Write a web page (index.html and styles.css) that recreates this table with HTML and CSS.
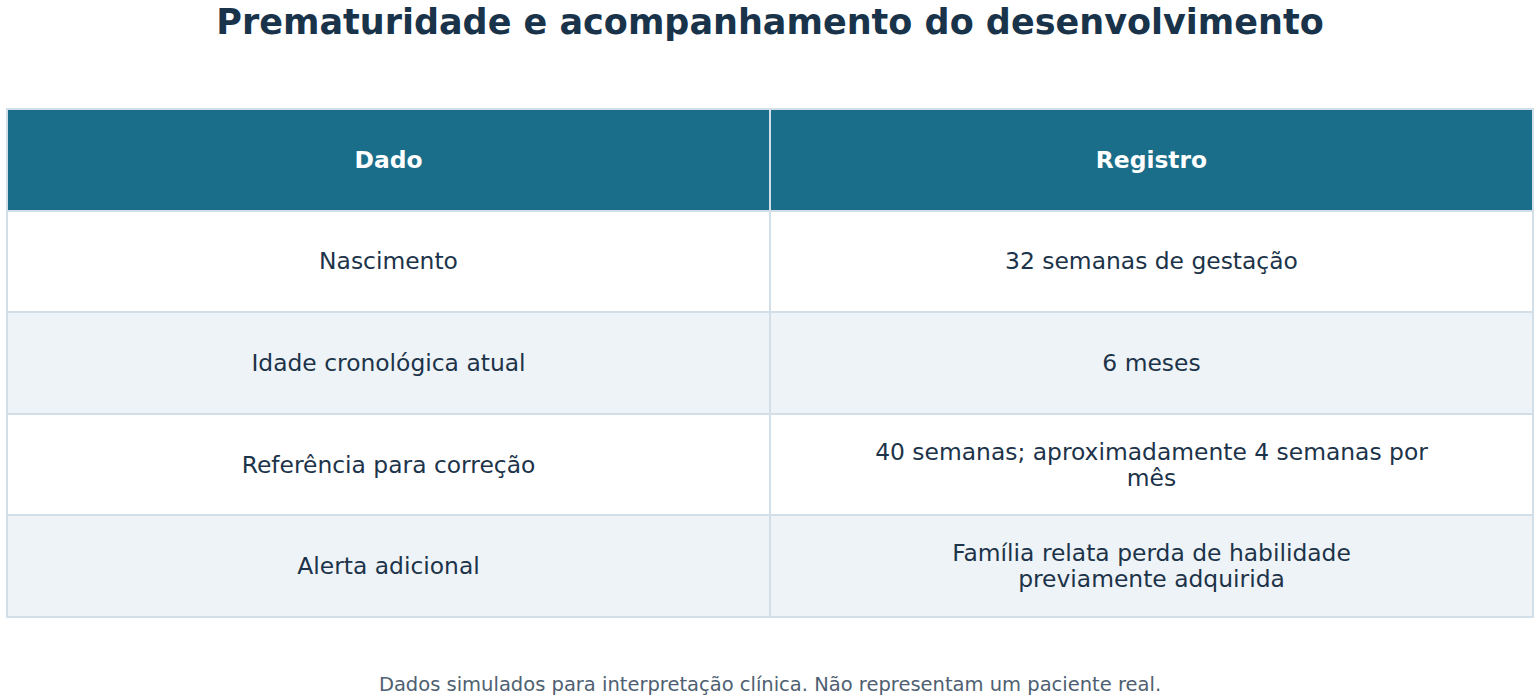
FILE: index.html
```html
<!DOCTYPE html>
<html lang="pt">
<head>
<meta charset="utf-8">
<link rel="stylesheet" href="styles.css">
</head>
<body>
<div class="page">
  <h1 class="title">Prematuridade e acompanhamento do desenvolvimento</h1>
  <table class="data">
    <thead>
      <tr><th>Dado</th><th>Registro</th></tr>
    </thead>
    <tbody>
      <tr><td>Nascimento</td><td>32 semanas de gestação</td></tr>
      <tr class="alt"><td>Idade cronológica atual</td><td>6 meses</td></tr>
      <tr><td>Referência para correção</td><td>40 semanas; aproximadamente 4 semanas por<br>mês</td></tr>
      <tr class="alt"><td>Alerta adicional</td><td>Família relata perda de habilidade<br>previamente adquirida</td></tr>
    </tbody>
  </table>
  <p class="note">Dados simulados para interpretação clínica. Não representam um paciente real.</p>
</div>
</body>
</html>
```
FILE: styles.css
```css
html, body {
  margin: 0;
  padding: 0;
  background: #ffffff;
}
body {
  font-family: "DejaVu Sans", sans-serif;
  color: #1c3349;
}
.page {
  width: 1540px;
  height: 700px;
  display: flex;
  flex-direction: column;
  align-items: center;
}
.title {
  margin: 0;
  height: 108px;
  font-size: 35px;
  font-weight: bold;
  line-height: 44px;
  color: #19344a;
  text-align: center;
}
.data {
  width: 1528px;
  border-collapse: collapse;
  table-layout: fixed;
}
.data th, .data td {
  width: 50%;
  height: 99.6px;
  padding: 0;
  border: 2px solid #d3dfe8;
  text-align: center;
  vertical-align: middle;
  font-size: 23.4px;
  line-height: 26px;
}
.data th {
  background: #1a6e89;
  color: #ffffff;
  font-weight: bold;
}
.data td {
  background: #ffffff;
  color: #1c3349;
}
.data tr.alt td {
  background: #eef3f7;
}
.note {
  margin: 55px 0 0;
  font-size: 19.5px;
  line-height: 24px;
  color: #4e6071;
  text-align: center;
}
```
